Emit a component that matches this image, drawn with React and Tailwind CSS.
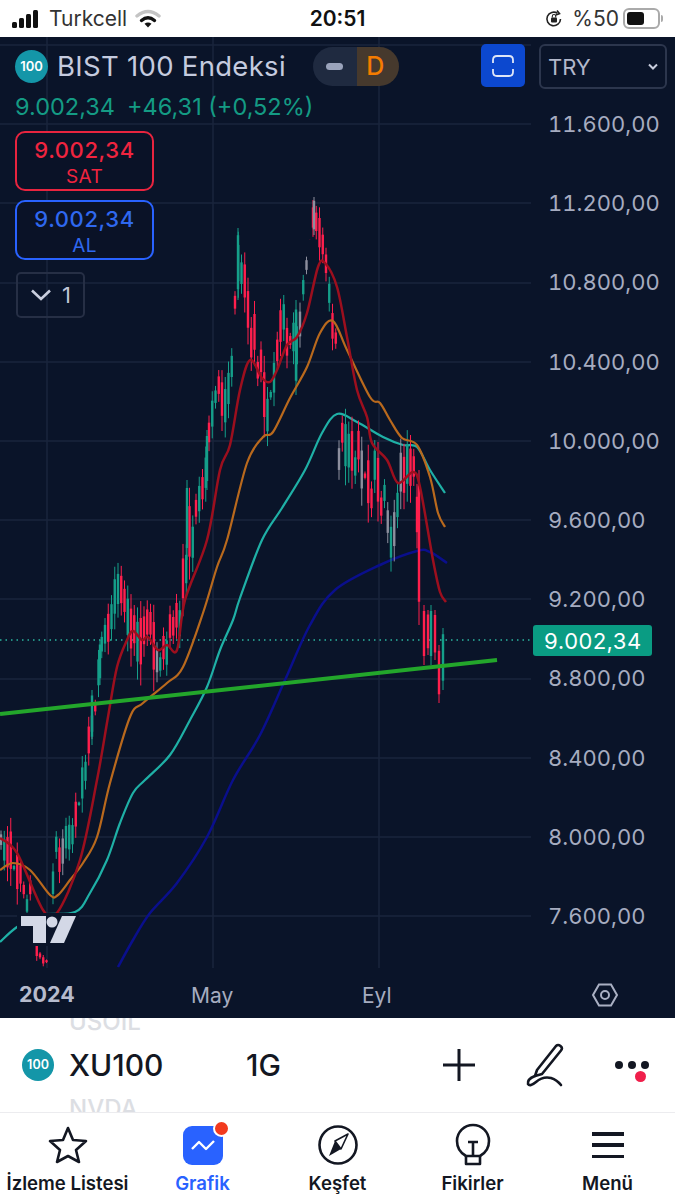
import React from 'react';

const font = { fontFamily: 'Inter, "Liberation Sans", sans-serif' };

const prices = ['11.600,00', '11.200,00', '10.800,00', '10.400,00', '10.000,00', '9.600,00', '9.200,00', '8.800,00', '8.400,00', '8.000,00', '7.600,00'];
const gridY = [45, 124, 203, 283, 362, 441, 520, 599, 679, 758, 837, 916];
const gridX = [47, 213, 379];

// x, top, bottom of the price range read off the picture
const envelope = [
  [0, 815, 870], [10, 815, 885], [20, 850, 912], [30, 870, 925], [38, 945, 968], [47, 950, 968], [55, 830, 895],
  [65, 820, 880], [75, 795, 850], [85, 740, 800], [92, 690, 750], [100, 640, 690], [110, 575, 650], [120, 555, 610],
  [130, 590, 665], [140, 600, 685], [150, 600, 692], [160, 610, 690], [170, 600, 670], [180, 590, 650], [187, 480, 590],
  [197, 490, 560], [207, 430, 500], [215, 370, 425], [225, 370, 440], [232, 340, 400], [238, 228, 300], [245, 250, 335],
  [255, 300, 395], [262, 335, 430], [268, 390, 450], [275, 330, 400], [282, 280, 345], [290, 300, 395], [297, 280, 390],
  [303, 255, 340], [312, 197, 240], [318, 197, 250], [325, 240, 300], [332, 290, 350], [337, 310, 360], [339, 407, 480],
  [350, 410, 490], [360, 420, 500], [368, 440, 530], [378, 440, 530], [388, 470, 560], [393, 510, 585], [400, 440, 520],
  [408, 425, 500], [415, 450, 520], [420, 520, 620], [425, 600, 665], [432, 605, 660], [438, 640, 703], [445, 628, 680],
];

// bars that stand out in the picture
const extraBars = [
  [238, 228, 300, '#159f8a'], [187, 480, 560, '#159f8a'], [207, 430, 490, '#159f8a'], [92, 690, 745, '#159f8a'],
  [100, 640, 685, '#159f8a'], [296, 300, 395, '#159f8a'], [314, 197, 235, '#8d8f9e'], [419, 470, 625, '#ff1f4d'],
  [424, 605, 665, '#ff1f4d'], [428, 610, 655, '#ff1f4d'], [431, 605, 665, '#159f8a'], [435, 610, 660, '#ff1f4d'],
  [439, 645, 703, '#ff1f4d'], [443, 628, 690, '#159f8a'],
];

const redLine = [[0, 838], [17, 853], [43, 910], [57, 913], [80, 860], [97, 780], [108, 717], [117, 667], [127, 640], [133, 631], [142, 640], [148, 637], [158, 650], [167, 645], [177, 650], [185, 600], [207, 540], [220, 470], [230, 445], [240, 390], [250, 360], [262, 378], [270, 382], [277, 370], [287, 345], [297, 337], [307, 313], [318, 267], [325, 263], [337, 287], [347, 337], [357, 390], [367, 417], [372, 443], [387, 460], [398, 483], [413, 472], [420, 487], [433, 560], [440, 592], [446, 602]];
const orangeLine = [[0, 870], [13, 863], [30, 870], [50, 895], [58, 895], [70, 880], [83, 863], [97, 837], [110, 783], [130, 717], [143, 703], [167, 683], [183, 667], [203, 613], [217, 567], [227, 540], [247, 463], [263, 437], [273, 432], [290, 398], [307, 367], [320, 333], [333, 321], [347, 350], [370, 397], [380, 403], [390, 420], [402, 438], [417, 445], [430, 477], [438, 513], [445, 527]];
const tealLine = [[0, 942], [17, 927], [40, 915], [75, 912], [90, 893], [107, 860], [120, 823], [133, 793], [145, 780], [170, 755], [190, 720], [207, 687], [220, 650], [233, 620], [240, 598], [262, 540], [282, 508], [305, 470], [322, 433], [337, 414], [357, 422], [383, 437], [403, 445], [417, 447], [430, 470], [445, 493]];
const navyLine = [[118, 967], [133, 940], [150, 913], [177, 883], [207, 837], [233, 780], [260, 735], [285, 680], [310, 625], [335, 590], [380, 565], [417, 551], [430, 552], [447, 563]];

function smooth(points) {
  let d = `M${points[0][0]} ${points[0][1]}`;
  for (let i = 0; i < points.length - 1; i++) {
    const p0 = points[i - 1] || points[i];
    const p1 = points[i];
    const p2 = points[i + 1];
    const p3 = points[i + 2] || p2;
    d += ` C${p1[0] + (p2[0] - p0[0]) / 6} ${p1[1] + (p2[1] - p0[1]) / 6} ${p2[0] - (p3[0] - p1[0]) / 6} ${p2[1] - (p3[1] - p1[1]) / 6} ${p2[0]} ${p2[1]}`;
  }
  return d;
}

function rnd(n) {
  const v = Math.sin(n * 127.1 + 11.7) * 43758.5453;
  return v - Math.floor(v);
}

function rangeAt(x) {
  for (let i = 0; i < envelope.length - 1; i++) {
    const a = envelope[i];
    const b = envelope[i + 1];
    if (x >= a[0] && x <= b[0]) {
      const t = (x - a[0]) / (b[0] - a[0]);
      return [a[1] + (b[1] - a[1]) * t, a[2] + (b[2] - a[2]) * t];
    }
  }
  return [envelope[0][1], envelope[0][2]];
}

const candles = [];
for (let i = 0; i < 129; i++) {
  const x = 1 + i * 3.25;
  const [hi, lo] = rangeAt(x);
  const span = lo - hi;
  const r1 = rnd(i);
  const r2 = rnd(i + 300);
  const top = hi + r1 * r1 * span * 0.55;
  const bottom = lo - r2 * r2 * span * 0.55;
  const bodyTop = top + (bottom - top) * 0.2;
  const bodyBottom = bottom - (bottom - top) * 0.25;
  const trend = rangeAt(x + 6)[0] - hi;
  const pick = rnd(i + 700);
  let color = pick < (trend < 0 ? 0.65 : 0.22) ? '#159f8a' : '#ff1f4d';
  if (rnd(i + 900) < 0.12) color = '#8d8f9e';
  candles.push({ x, top, bottom, bodyTop, bodyBottom, color });
}
extraBars.forEach(([x, top, bottom, color]) => {
  candles.push({ x, top, bottom, bodyTop: top + (bottom - top) * 0.1, bodyBottom: bottom - (bottom - top) * 0.15, color });
});

function ChartDrawing() {
  return (
    <svg className="absolute inset-0" width="675" height="981" viewBox="0 37 675 981">
      {gridY.map((y) => <line key={y} x1="0" x2="531" y1={y} y2={y} stroke="#1a243d" strokeWidth="1.5" />)}
      {gridX.map((x) => <line key={x} x1={x} x2={x} y1="37" y2="968" stroke="#1a243d" strokeWidth="1.5" />)}
      <line x1="0" x2="532" y1="640" y2="640" stroke="#2bb5a0" strokeWidth="1.5" strokeDasharray="1.5 4" />
      <path d={smooth(navyLine)} fill="none" stroke="#0a0f8c" strokeWidth="2.5" />
      <path d={smooth(tealLine)} fill="none" stroke="#1fb0a6" strokeWidth="2.2" />
      {candles.map((c, i) => (
        <g key={i}>
          <line x1={c.x} x2={c.x} y1={c.top} y2={Math.min(c.bottom, 968)} stroke={c.color} strokeWidth="1" />
          <line x1={c.x} x2={c.x} y1={c.bodyTop} y2={Math.min(c.bodyBottom, 968)} stroke={c.color} strokeWidth="2.4" />
        </g>
      ))}
      <path d={smooth(orangeLine)} fill="none" stroke="#b9691d" strokeWidth="2.2" />
      <path d={smooth(redLine)} fill="none" stroke="#9c0f1e" strokeWidth="2.5" />
      <line x1="0" y1="714" x2="497" y2="660" stroke="#23a62b" strokeWidth="4" />
      {/* watermark */}
      <rect x="17" y="913" width="62" height="33" fill="#0a1429" />
      <path d="M21 916 H46 V943 H33 V926 H21 Z" fill="#d3d8e6" />
      <circle cx="52" cy="922" r="5.5" fill="#d3d8e6" />
      <path d="M62 916 H76 L64 943 H50 Z" fill="#d3d8e6" />
    </svg>
  );
}

function Badge({ className }) {
  return (
    <div className={`flex items-center justify-center rounded-full bg-[#1496a8] font-semibold text-white ${className}`}>100</div>
  );
}

function StatusBar() {
  return (
    <div className="flex h-[37px] items-center justify-between bg-white pl-[12px] pr-[12px] text-[#111]">
      <div className="flex w-[200px] items-center">
        <svg width="30" height="20" viewBox="0 0 30 20" fill="#111">
          <rect x="0" y="13" width="5" height="6" rx="1.5" />
          <rect x="7" y="9" width="5" height="10" rx="1.5" />
          <rect x="14" y="5" width="5" height="14" rx="1.5" />
          <rect x="21" y="1" width="5" height="18" rx="1.5" />
        </svg>
        <span className="ml-[7px] text-[21px] leading-none text-[#333]">Turkcell</span>
        <svg className="ml-[8px]" width="26" height="20" viewBox="0 0 26 20" fill="none" strokeLinecap="round">
          <path d="M2 7 Q13 -2 24 7" stroke="#c4c4c4" strokeWidth="3.4" />
          <path d="M6.5 11.5 Q13 6 19.5 11.5" stroke="#111" strokeWidth="3.4" />
          <path d="M13 18.5 L9.5 14.8 Q13 12 16.5 14.8 Z" fill="#111" />
        </svg>
      </div>
      <span className="text-[21px] font-semibold leading-none text-[#111]">20:51</span>
      <div className="flex w-[200px] items-center justify-end">
        <svg width="20" height="20" viewBox="0 0 20 20" fill="none" stroke="#222" strokeWidth="1.6">
          <path d="M16.5 10 A6.8 6.8 0 1 1 13.5 4.3" />
          <path d="M13 1.5 L15.5 4.7 L11.8 6" />
          <rect x="7" y="8.5" width="6" height="5" rx="1" fill="#222" stroke="none" />
          <path d="M8.3 8.5 V7.2 A1.7 1.7 0 0 1 11.7 7.2 V8.5" strokeWidth="1.1" />
        </svg>
        <span className="ml-[8px] text-[21px] leading-none text-[#333]">%50</span>
        <div className="ml-[4px] flex h-[21px] w-[37px] items-center rounded-[6px] border-2 border-[#aaa] p-[2px]">
          <div className="h-full w-[17px] rounded-[3px] bg-[#111]" />
        </div>
        <div className="ml-[1px] h-[7px] w-[2px] rounded-r bg-[#aaa]" />
      </div>
    </div>
  );
}

function ChartHeader() {
  return (
    <div className="flex items-start justify-between pl-[15px] pr-[8px] pt-[7px]">
      <div>
        <div className="flex h-[45px] items-center">
          <Badge className="h-[33px] w-[33px] text-[13px]" />
          <span className="ml-[9px] text-[27.5px] leading-none tracking-[0.3px] text-[#c5cbdf]">BIST 100 Endeksi</span>
          <div className="ml-[27px] flex h-[39px] w-[86px] overflow-hidden rounded-full">
            <div className="flex w-[44px] items-center justify-center bg-[#1f2a40]">
              <div className="h-[7px] w-[17px] rounded-full bg-[#9aa3bb]" />
            </div>
            <div className="flex flex-1 items-center justify-center bg-[#46392d] pr-[5px] text-[25px] font-medium leading-none text-[#f57c00]">D</div>
          </div>
        </div>
        <div className="mt-[3px] text-[23.5px] leading-[30px] text-[#149b84]">
          9.002,34<span className="ml-[12px]">+46,31 (+0,52%)</span>
        </div>
      </div>
      <div className="flex items-start">
        <div className="flex h-[43px] w-[44px] items-center justify-center rounded-[5px] bg-[#0c48cf]">
          <svg width="22" height="24" viewBox="0 0 22 24" fill="none" stroke="#dfe6f7" strokeWidth="1.8">
            <path d="M1 9 V6 Q1 2 5 2 H17 Q21 2 21 6 V9" />
            <path d="M1 15 V18 Q1 22 5 22 H17 Q21 22 21 18 V15" />
          </svg>
        </div>
        <div className="ml-[14px] flex h-[45px] w-[128px] items-center justify-between rounded-[6px] border-2 border-[#2c364d] pl-[7px] pr-[6px]">
          <span className="text-[22px] leading-none text-[#b2b8cb]">TRY</span>
          <svg width="12" height="8" viewBox="0 0 12 8" fill="none" stroke="#c9cede" strokeWidth="2">
            <path d="M2 1.5 L6 5.5 L10 1.5" />
          </svg>
        </div>
      </div>
    </div>
  );
}

function OrderButton({ price, label, className }) {
  return (
    <div className={`flex h-[60px] w-[139px] flex-col items-center justify-center rounded-[10px] border-2 bg-[#0a1227] pt-[3px] ${className}`}>
      <span className="text-[22px] font-medium leading-[27px] tracking-[0.6px]">{price}</span>
      <span className="text-[19px] leading-[25px] tracking-[0.4px]">{label}</span>
    </div>
  );
}

function PriceAxis() {
  return (
    <div className="absolute left-[548px] top-[47.5px] flex flex-col items-start">
      {prices.map((p) => (
        <div key={p} className="flex h-[79.2px] items-center text-[22px] leading-none tabular-nums text-[#a6acc0]">{p}</div>
      ))}
    </div>
  );
}

function TimeAxis() {
  return (
    <div className="absolute inset-x-0 bottom-[-2px] flex h-[50px] items-center">
      <span className="ml-[19px] w-[172px] text-[21.5px] font-bold leading-none text-[#b6bbcd]">2024</span>
      <span className="w-[171px] text-[21px] leading-none text-[#a6acc0]">May</span>
      <span className="w-[229px] text-[21px] leading-none text-[#a6acc0]">Eyl</span>
      <svg width="28" height="26" viewBox="0 0 28 26" fill="none" stroke="#aab0c3" strokeWidth="2">
        <path d="M8 2.5 H20 L26 13 L20 23.5 H8 L2 13 Z" />
        <circle cx="14" cy="13" r="4" />
      </svg>
    </div>
  );
}

function Toolbar() {
  return (
    <div className="relative flex h-[95px] items-center overflow-hidden border-b border-[#ececef] bg-white pl-[22px] text-[#131722]">
      <span className="absolute left-[69px] top-[-10px] text-[24px] leading-[28px] font-medium text-[#dcdee3]">USOIL</span>
      <span className="absolute left-[69px] bottom-[-11px] text-[24px] leading-[28px] font-medium text-[#dcdee3]">NVDA</span>
      <Badge className="h-[32px] w-[32px] text-[12.5px]" />
      <span className="ml-[15px] w-[177px] text-[30px] font-medium leading-none">XU100</span>
      <span className="w-[196px] text-[30px] font-medium leading-none">1G</span>
      <svg width="34" height="34" viewBox="0 0 34 34" fill="none" stroke="#131722" strokeWidth="3">
        <path d="M17 1 V33 M1 17 H33" />
      </svg>
      <svg className="ml-[49px]" width="40" height="44" viewBox="0 0 40 44" fill="none" stroke="#131722" strokeWidth="2.6" strokeLinejoin="round" strokeLinecap="round">
        <path d="M12 27 L31 3 Q33 1 35.5 3 Q38 5 36 7.5 L17 31 L10 33 Z" />
        <path d="M10 33 Q2 36 3 41 Q5 44 11 39 Q18 33 26 35 Q32 37 36 42" />
      </svg>
      <div className="relative ml-[50px] flex gap-[5px]">
        <div className="h-[8px] w-[8px] rounded-full bg-[#131722]" />
        <div className="h-[8px] w-[8px] rounded-full bg-[#131722]" />
        <div className="h-[8px] w-[8px] rounded-full bg-[#131722]" />
        <div className="absolute left-[20px] top-[10px] h-[11px] w-[11px] rounded-full bg-[#f01f4b]" />
      </div>
    </div>
  );
}

const navItems = [
  {
    label: 'İzleme Listesi',
    icon: (
      <svg width="40" height="40" viewBox="0 0 40 40" fill="none" stroke="#131722" strokeWidth="2.6" strokeLinejoin="round">
        <path d="M20 3 L25 15 L38 16 L28 25 L31 37 L20 31 L9 37 L12 25 L2 16 L15 15 Z" />
      </svg>
    ),
  },
  {
    label: 'Grafik',
    active: true,
    icon: (
      <div className="relative h-[39px] w-[40px] rounded-[9px] bg-[#2962ff]">
        <svg className="absolute left-[8px] top-[12px]" width="24" height="16" viewBox="0 0 24 16" fill="none" stroke="#fff" strokeWidth="2.4" strokeLinejoin="round">
          <path d="M1 11 L8 4 L15 11 L23 3" />
        </svg>
        <div className="absolute right-[-7px] top-[-6px] h-[17px] w-[17px] rounded-full border-2 border-white bg-[#f23a1e]" />
      </div>
    ),
  },
  {
    label: 'Keşfet',
    icon: (
      <svg width="42" height="42" viewBox="0 0 42 42" fill="none">
        <circle cx="21" cy="21" r="18.5" stroke="#131722" strokeWidth="2.6" />
        <path d="M31 10 L24 25 L12 32 L18 17 Z" fill="#131722" />
        <path d="M31 10 L24 25 L18 17 Z" fill="#fff" stroke="#131722" strokeWidth="1.6" strokeLinejoin="round" />
      </svg>
    ),
  },
  {
    label: 'Fikirler',
    icon: (
      <svg width="36" height="44" viewBox="0 0 36 44" fill="none" stroke="#131722" strokeWidth="2.6" strokeLinejoin="round">
        <path d="M11 33 Q2 28 2 18 A16 16 0 0 1 34 18 Q34 28 25 33 Z" />
        <path d="M13 19 H23 M18 19 V33" />
        <path d="M11 33 V41 H25 V33" />
      </svg>
    ),
  },
  {
    label: 'Menü',
    icon: (
      <div className="flex h-[26px] w-[32px] flex-col justify-between">
        <div className="h-[3.5px] bg-[#131722]" />
        <div className="h-[3.5px] bg-[#131722]" />
        <div className="h-[3.5px] bg-[#131722]" />
      </div>
    ),
  },
];

function BottomNav() {
  return (
    <div className="grid h-[87px] grid-cols-5 bg-white">
      {navItems.map((item) => (
        <div key={item.label} className="flex flex-col items-center">
          <div className="flex h-[58px] items-center justify-center pt-[6px]">{item.icon}</div>
          <span className={`whitespace-nowrap text-[18.6px] font-semibold leading-[25px] ${item.active ? 'text-[#2962ff]' : 'text-[#131722]'}`}>{item.label}</span>
        </div>
      ))}
    </div>
  );
}

export default function App() {
  return (
    <div className="flex h-[1200px] w-[675px] flex-col overflow-hidden bg-white" style={font}>
      <StatusBar />
      <div className="relative h-[981px] bg-[#0a1429]">
        <ChartDrawing />
        <div className="relative">
          <ChartHeader />
          <div className="flex flex-col pl-[15px] pt-[9px]">
            <OrderButton price="9.002,34" label="SAT" className="border-[#e8243f] text-[#f0243f]" />
            <div className="mt-[9px]">
              <OrderButton price="9.002,34" label="AL" className="border-[#2962ff] text-[#2f68f0]" />
            </div>
            <div className="ml-[1px] mt-[12px] flex h-[46px] w-[69px] items-center justify-center gap-[10px] rounded-[5px] border-2 border-[#262f45]">
              <svg width="22" height="14" viewBox="0 0 22 14" fill="none" stroke="#c9cede" strokeWidth="2.6">
                <path d="M2 2.5 L11 11 L20 2.5" />
              </svg>
              <span className="text-[22px] leading-none text-[#c0c5d6]">1</span>
            </div>
          </div>
        </div>
        <PriceAxis />
        <div className="absolute right-[23px] top-[588px] flex h-[31px] w-[119px] items-center justify-center rounded-[3px] bg-[#0a9c83] text-[22px] leading-none tabular-nums text-white">9.002,34</div>
        <TimeAxis />
      </div>
      <Toolbar />
      <BottomNav />
    </div>
  );
}
